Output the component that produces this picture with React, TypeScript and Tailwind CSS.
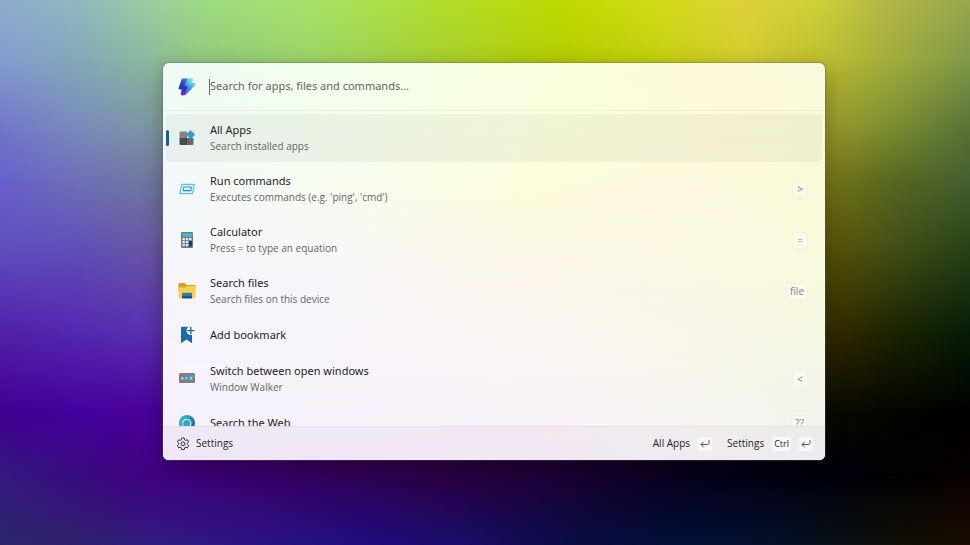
import type { ReactNode } from "react";

type Band = { at: number; stops: string };

const wallpaper: Band[] = [
  { at: 0, stops: "#90accc 0%, #90b8c0 8%, #9cd09c 16%, #9edc80 22%, #a8e268 32%, #b0de30 45%, #c0da00 58%, #d2dc18 68%, #dcd238 76%, #ccd03a 85%, #b4b848 91%, #98a84c 100%" },
  { at: 11, stops: "#849cd0 0%, #84a8b8 8%, #8ab8a0 15%, #92c880 20%, #9cd468 32%, #a8d030 45%, #b4cc00 58%, #c4d010 68%, #d4cc30 77%, #bcbe30 85%, #a0ac3c 92%, #80984a 100%" },
  { at: 24, stops: "#7074cc 0%, #7888bc 8%, #7c94a4 15%, #8cb05c 32%, #98b420 50%, #a8b418 68%, #a4a420 80%, #94942a 86%, #788c30 92%, #587038 100%" },
  { at: 33, stops: "#6860cc 0%, #7070b8 8%, #7078a0 15%, #707c50 50%, #7c7c18 84%, #747418 86%, #586820 92%, #446030 100%" },
  { at: 45, stops: "#6050c0 0%, #6050b8 8%, #6858a4 15%, #606850 50%, #58580c 84%, #54540a 87%, #445018 92%, #284418 100%" },
  { at: 61, stops: "#5020a8 0%, #5428b0 8%, #5830b0 15%, #403828 50%, #342c00 85%, #302800 87%, #1c2400 92%, #061c08 100%" },
  { at: 76, stops: "#400090 0%, #44009c 8%, #4a0098 16%, #280030 50%, #0a0a00 85%, #040400 92%, #000000 100%" },
  { at: 87, stops: "#341880 0%, #380c80 8%, #400080 16%, #340064 30%, #2c0044 45%, #1c0034 58%, #08001c 70%, #00000c 85%, #020204 92%, #080000 100%" },
  { at: 100, stops: "#2c2868 0%, #30206c 8%, #301c80 16%, #2c1484 26%, #200c80 38%, #180c68 48%, #080c40 60%, #001038 70%, #04102a 80%, #08101a 85%, #101008 92%, #1c0c00 100%" },
];

const glass: Band[] = [
  { at: 0, stops: "#effcf6 0%, #f4ffee 25%, #f9ffe0 55%, #fdfbda 80%, #fbfae0 100%" },
  { at: 14, stops: "#f0fbf6 0%, #f5feec 30%, #faffdc 60%, #fdfad8 85%, #fafad8 100%" },
  { at: 32, stops: "#f4f8fa 0%, #f8fcee 30%, #fdfcdc 55%, #fdf9e0 75%, #f9fad8 100%" },
  { at: 55, stops: "#f5f5fb 0%, #f8f6fa 25%, #fcf6f0 45%, #faf6e8 70%, #f8f9dc 100%" },
  { at: 78, stops: "#f6f3fc 0%, #f8f4fb 30%, #faf4f6 55%, #f8f5ee 75%, #f4f5e6 100%" },
  { at: 100, stops: "#f3f0fb 0%, #f6effa 30%, #f7f0f8 60%, #f4f4f4 80%, #f2f3f2 100%" },
];

/** Blends horizontal gradients into one another down the height of the parent. */
function Mesh({ bands }: { bands: Band[] }) {
  return (
    <div aria-hidden="true" className="pointer-events-none absolute inset-0 overflow-hidden rounded-[inherit]">
      {bands.map((band, i) => {
        const fade =
          i === 0 ? undefined : `linear-gradient(to bottom, transparent ${bands[i - 1].at}%, #000 ${band.at}%)`;
        return (
          <div
            key={band.at}
            className="absolute inset-0"
            style={{ backgroundImage: `linear-gradient(to right, ${band.stops})`, maskImage: fade }}
          />
        );
      })}
    </div>
  );
}

function PaletteLogo() {
  return (
    <svg viewBox="0 0 20 20" className="size-5" aria-hidden="true">
      <defs>
        <linearGradient id="boltLeft" x1="0.7" y1="0" x2="0.3" y2="1">
          <stop offset="0" stopColor="#3b7fdc" />
          <stop offset="0.4" stopColor="#3434b4" />
          <stop offset="0.7" stopColor="#3d2fc0" />
          <stop offset="1" stopColor="#7a4ae0" />
        </linearGradient>
        <linearGradient id="boltRight" x1="0.2" y1="1" x2="0.8" y2="0">
          <stop offset="0" stopColor="#6a4ae8" />
          <stop offset="0.4" stopColor="#3a86e6" />
          <stop offset="0.8" stopColor="#66dcee" />
        </linearGradient>
      </defs>
      <path d="M8 1.500h7c.8 0 1.200.7.900 1.400L14.600 6h3.200c.9 0 1.300 1 .7 1.700L8.400 18c-.7.7-1.700.1-1.500-.8L8 12.500H6L9 3Z" fill="url(#boltRight)" />
      <path d="M6.300 1.500h4.200L7.400 8.900h3.200L7.600 17.600c-.8 1.300-2.400 1.100-3.200.7-.7-.3-.9-1-.7-1.700l1-4.100H2.700c-.8 0-1.400-.8-1.100-1.600l3-8.300c.3-.7.900-1.100 1.700-1.100Z" fill="url(#boltLeft)" />
    </svg>
  );
}

function AllAppsIcon() {
  return (
    <svg viewBox="0 0 16 16" className="size-4" aria-hidden="true">
      <path d="M1.500 1.500H8V8H.5V2.500a1 1 0 0 1 1-1Z" fill="#838383" />
      <path d="M.5 8H8v7H1.500a1 1 0 0 1-1-1Z" fill="#4a4a4a" />
      <path d="M8 8h6.500v6a1 1 0 0 1-1 1H8Z" fill="#686868" />
      <path d="m11.900.4 3.700 3.600c.4.4.4.800 0 1.200l-3.300 3.400c-.4.400-.8.400-1.200 0L7.700 5.200c-.4-.4-.4-.8 0-1.200L11 .4c.300-.3.600-.3.900 0Z" fill="#2f9bd8" />
    </svg>
  );
}

function RunIcon() {
  return (
    <svg viewBox="0 0 16 16" className="size-4" aria-hidden="true">
      <path d="M2.700 3.300h12.600L13.700 12.700H.7Z" fill="#d9f4fb" stroke="#45b4d2" strokeLinejoin="round" />
      <path d="M4.700 6h7.800l-.6 3.800H4Z" fill="#e9fbff" stroke="#2d92c4" strokeLinejoin="round" />
      <path d="M4.400 9.400h7.400" stroke="#2f86c0" />
    </svg>
  );
}

function CalculatorIcon() {
  return (
    <svg viewBox="0 0 16 16" className="size-4" aria-hidden="true">
      <rect x="2" y="0" width="12" height="16" rx="1.200" fill="#6b7a86" />
      <rect x="3.200" y="1.200" width="9.600" height="3.600" fill="#4cb6cc" />
      <g fill="#e6ebee">
        <rect x="3.500" y="6" width="2.400" height="2.200" />
        <rect x="6.800" y="6" width="2.400" height="2.200" />
        <rect x="3.500" y="9" width="2.400" height="2.200" />
        <rect x="6.800" y="9" width="2.400" height="2.200" />
        <rect x="3.500" y="12" width="2.400" height="2.200" />
        <rect x="6.800" y="12" width="2.400" height="2.200" />
        <rect x="10.100" y="6" width="2.400" height="2.200" />
      </g>
      <rect x="10.100" y="9" width="2.700" height="5.500" fill="#123a66" />
    </svg>
  );
}

function FolderIcon() {
  return (
    <svg viewBox="0 0 18 18" className="size-4.5" aria-hidden="true">
      <path d="M.5 2c0-.6.4-1 1-1h5.300L8.500 3H16.500c.6 0 1 .4 1 1v4H.5Z" fill="#d6a322" />
      <path d="M.5 5.500H7L9 4h8.500v11.300c0 .6-.4 1-1 1h-15c-.6 0-1-.4-1-1Z" fill="#f8cf50" />
      <path d="M4 16.300v-4c0-.8.6-1.500 1.500-1.500h7c.9 0 1.500.7 1.500 1.500v4Z" fill="#2a7cb4" />
      <path d="M4 14.300h10v2H4Z" fill="#0e5290" />
    </svg>
  );
}

function BookmarkIcon() {
  return (
    <svg viewBox="0 0 18 18" className="size-4.5" aria-hidden="true">
      <path d="M3 2c0-.7.500-1.200 1.200-1.200h9.800v16.400L8.600 13.400 3 17.200Z" fill="#1f68a6" />
      <circle cx="12.800" cy="4.600" r="4.400" fill="#f7f5fb" />
      <path d="M12.800 1v7.200M9.200 4.600h7.200" stroke="#27628f" strokeWidth="1.300" />
    </svg>
  );
}

function WindowWalkerIcon() {
  return (
    <svg viewBox="0 0 16 16" className="size-4" aria-hidden="true">
      <rect x="0" y="2" width="16" height="10" rx="1.500" fill="#7a8088" />
      <rect x="2" y="6" width="2.500" height="2.500" fill="#b4ccd8" />
      <rect x="6" y="6" width="2.500" height="2.500" fill="#8cc4da" />
      <rect x="9.700" y="4.500" width="5" height="5" rx="1" fill="#4aa0c4" />
      <rect x="11" y="6" width="2.200" height="2.200" fill="#8adcf0" />
    </svg>
  );
}

function WebIcon() {
  return (
    <svg viewBox="0 0 16 16" className="size-4" aria-hidden="true">
      <defs>
        <linearGradient id="globe" x1="0" y1="0" x2="1" y2="0.600">
          <stop offset="0" stopColor="#42c0b8" />
          <stop offset="0.500" stopColor="#2aa0b8" />
          <stop offset="1" stopColor="#1868a8" />
        </linearGradient>
      </defs>
      <circle cx="8" cy="8" r="8" fill="url(#globe)" />
      <circle cx="7.700" cy="8.500" r="4.200" fill="#30a4cc" stroke="#c4f0f6" strokeWidth="1.200" />
      <path d="m10.800 11.800 3 3" stroke="#c4f0f6" strokeWidth="1.200" />
    </svg>
  );
}

function GearIcon() {
  return (
    <svg viewBox="0 0 24 24" className="size-3.5" fill="none" stroke="#2f2b36" strokeWidth="1.700" strokeLinejoin="round" aria-hidden="true">
      <path d="M12 1.500c.8 0 1.500.1 2.200.3l.5 2.700c.2.900 1.200 1.500 2.100 1.200l2.600-.9c1 1.100 1.800 2.400 2.200 3.800l-2.100 1.800c-.8.700-.8 1.900 0 2.500l2.100 1.800c-.4 1.400-1.200 2.700-2.200 3.800l-2.600-.9c-.9-.3-1.900.3-2.100 1.200l-.5 2.700c-1.400.4-3 .4-4.400 0l-.5-2.700c-.2-.9-1.200-1.500-2.100-1.200l-2.600.9a10 10 0 0 1-2.200-3.800l2.100-1.800c.8-.6.800-1.800 0-2.500L2.400 8.600c.4-1.400 1.200-2.700 2.200-3.800l2.600.9c.9.300 1.900-.3 2.100-1.200l.5-2.700c.7-.2 1.400-.3 2.200-.3Z" />
      <circle cx="12" cy="11.700" r="3.300" />
    </svg>
  );
}

function EnterIcon() {
  return (
    <svg viewBox="0 0 12 12" className="size-3" fill="none" stroke="#55515b" aria-hidden="true">
      <path d="M10 2.500v2.300c0 1-.5 1.700-1.700 1.700H2.300M4.500 4 2 6.500 4.500 9" strokeLinecap="round" strokeLinejoin="round" />
    </svg>
  );
}

function Key({ children }: { children: ReactNode }) {
  return (
    <kbd className="flex h-4 min-w-4 items-center justify-center rounded-[3px] border border-black/4 bg-white/60 font-[inherit] text-[9px]">
      {children}
    </kbd>
  );
}

type Command = { title: string; subtitle?: string; alias?: string; icon: ReactNode };

const commands: Command[] = [
  { title: "All Apps", subtitle: "Search installed apps", icon: <AllAppsIcon /> },
  { title: "Run commands", subtitle: "Executes commands (e.g. 'ping', 'cmd')", alias: ">", icon: <RunIcon /> },
  { title: "Calculator", subtitle: "Press = to type an equation", alias: "=", icon: <CalculatorIcon /> },
  { title: "Search files", subtitle: "Search files on this device", alias: "file", icon: <FolderIcon /> },
  { title: "Add bookmark", icon: <BookmarkIcon /> },
  { title: "Switch between open windows", subtitle: "Window Walker", alias: "<", icon: <WindowWalkerIcon /> },
  { title: "Search the Web", alias: "??", icon: <WebIcon /> },
];

function CommandRow({ command, selected }: { command: Command; selected: boolean }) {
  return (
    <li className="shrink-0">
      <button
        type="button"
        className={`relative flex w-full items-center rounded-sm pr-[14px] pl-3 text-left ${
          command.subtitle ? "h-12" : "h-[34px]"
        } ${selected ? "bg-black/4" : ""}`}
      >
        {selected && <span className="absolute left-0 h-4 w-[3px] rounded-full bg-[#17608f]" />}
        <span className="flex w-[18px] shrink-0 justify-center">{command.icon}</span>
        <span className="ml-[14px] flex-1">
          <span className="block font-['Noto_Sans',sans-serif] text-[11px] leading-4 text-[#25242a]">
            {command.title}
          </span>
          {command.subtitle && <span className="block text-[10px] leading-4 text-[#66646a]">{command.subtitle}</span>}
        </span>
        {command.alias && (
          <span className="flex h-[17px] min-w-4 items-center justify-center rounded-[3px] border border-black/4 bg-white/40 px-[3px] text-[10px] text-[#85837e]">
            {command.alias}
          </span>
        )}
      </button>
    </li>
  );
}

export default function App() {
  return (
    <main className="relative min-h-screen overflow-hidden pt-[63px] pr-[145px] pb-10 pl-[163px] font-['Open_Sans','Noto_Sans',sans-serif]">
      <Mesh bands={wallpaper} />
      <section
        aria-label="Command palette"
        className="relative flex flex-col rounded-md shadow-[0_0_0_1px_rgba(90,90,90,0.35),0_6px_22px_rgba(0,0,0,0.3)]"
      >
        <Mesh bands={glass} />
        <div className="relative flex h-12 items-center border-b border-black/5 pl-[14px]">
          <PaletteLogo />
          <span className="ml-3 h-4 w-px bg-[#6c6c6c]" />
          <input
            type="text"
            aria-label="Search for apps, files and commands"
            placeholder="Search for apps, files and commands..."
            className="flex-1 bg-transparent font-['Noto_Sans',sans-serif] text-[11px] text-[#25242a] outline-none placeholder:text-[#64665f]"
          />
        </div>
        <ul className="relative flex h-[315px] flex-col gap-[3px] overflow-hidden px-[3px] pt-[3px]">
          {commands.map((command, i) => (
            <CommandRow key={command.title} command={command} selected={i === 0} />
          ))}
        </ul>
        <footer className="relative flex h-[34px] items-center rounded-b-md border-t border-black/5 bg-[#c8a0d0]/10 pr-[11px] pl-[13px] text-[10px] text-[#25242a]">
          <button type="button" className="flex items-center gap-[6px]">
            <GearIcon />
            Settings
          </button>
          <button type="button" className="ml-auto flex items-center gap-[7px]">
            All Apps
            <Key>
              <EnterIcon />
            </Key>
          </button>
          <button type="button" className="ml-[14px] flex items-center gap-[7px]">
            Settings
            <span className="flex gap-[6px]">
              <Key>
                <span className="px-0.5">Ctrl</span>
              </Key>
              <Key>
                <EnterIcon />
              </Key>
            </span>
          </button>
        </footer>
      </section>
    </main>
  );
}
